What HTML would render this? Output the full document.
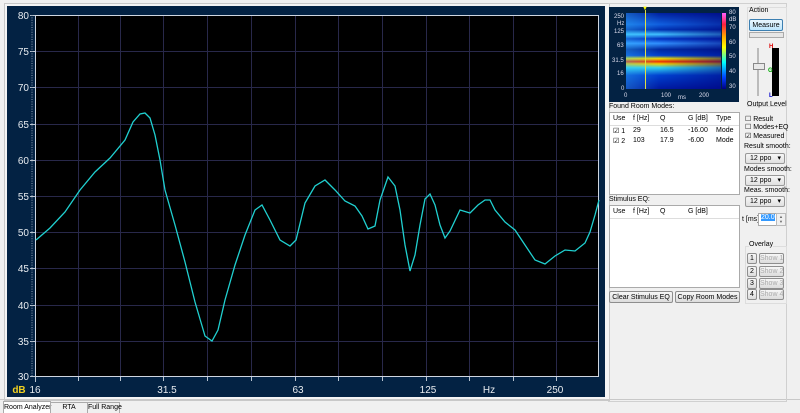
<!DOCTYPE html>
<html><head><style>
html,body{margin:0;width:800px;height:413px;overflow:hidden}
body{background:#f0f0f0;position:relative;font-family:"Liberation Sans",sans-serif;font-size:7px;color:#000}
*{white-space:nowrap}
.a{position:absolute}
.btn{position:absolute;background:linear-gradient(#f6f6f6,#dcdcdc);border:1px solid #8e8e8e;border-radius:2px;text-align:center;font-size:7px;line-height:11px;overflow:hidden}
.dd{position:absolute;background:linear-gradient(#f6f6f6,#e0e0e0);border:1px solid #999;border-radius:2px;font-size:7px;line-height:10px;padding-left:4px;box-sizing:border-box}
.dd:after{content:"▾";position:absolute;right:3px;top:0;font-size:7px}
table{border-collapse:collapse;font-size:7px}
.sl{position:absolute;color:#dde;font-size:6px;line-height:6px}
</style></head><body>
<div class="a" style="left:4px;top:3px;width:604px;height:396px;border:1px solid #c8c8c8;background:#f4f4f4"></div>
<svg class="a" style="left:0;top:0" width="606" height="400">
<rect x="7" y="6" width="598" height="391" fill="#032243"/>
<rect x="35" y="15" width="564" height="362" fill="#000"/>
<g stroke="#28284a" stroke-width="1">
<line x1="35" y1="51.5" x2="599" y2="51.5"/><line x1="35" y1="87.5" x2="599" y2="87.5"/><line x1="35" y1="124.5" x2="599" y2="124.5"/><line x1="35" y1="160.5" x2="599" y2="160.5"/><line x1="35" y1="196.5" x2="599" y2="196.5"/><line x1="35" y1="232.5" x2="599" y2="232.5"/><line x1="35" y1="268.5" x2="599" y2="268.5"/><line x1="35" y1="305.5" x2="599" y2="305.5"/><line x1="35" y1="341.5" x2="599" y2="341.5"/>
<line x1="78.5" y1="15" x2="78.5" y2="377"/><line x1="120.5" y1="15" x2="120.5" y2="377"/><line x1="163.5" y1="15" x2="163.5" y2="377"/><line x1="207.5" y1="15" x2="207.5" y2="377"/><line x1="251.5" y1="15" x2="251.5" y2="377"/><line x1="295.5" y1="15" x2="295.5" y2="377"/><line x1="338.5" y1="15" x2="338.5" y2="377"/><line x1="382.5" y1="15" x2="382.5" y2="377"/><line x1="426.5" y1="15" x2="426.5" y2="377"/><line x1="469.5" y1="15" x2="469.5" y2="377"/><line x1="513.5" y1="15" x2="513.5" y2="377"/><line x1="556.5" y1="15" x2="556.5" y2="377"/>
</g>
<rect x="35.5" y="15.5" width="563" height="361" fill="none" stroke="#cfd6e0"/>
<g stroke="#b8c4d0">
<line x1="30" y1="15.5" x2="35" y2="15.5"/><line x1="30" y1="51.5" x2="35" y2="51.5"/><line x1="30" y1="87.5" x2="35" y2="87.5"/><line x1="30" y1="124.5" x2="35" y2="124.5"/><line x1="30" y1="160.5" x2="35" y2="160.5"/><line x1="30" y1="196.5" x2="35" y2="196.5"/><line x1="30" y1="232.5" x2="35" y2="232.5"/><line x1="30" y1="268.5" x2="35" y2="268.5"/><line x1="30" y1="305.5" x2="35" y2="305.5"/><line x1="30" y1="341.5" x2="35" y2="341.5"/><line x1="30" y1="376.5" x2="35" y2="376.5"/>
<line x1="35.5" y1="377" x2="35.5" y2="382"/><line x1="78.5" y1="377" x2="78.5" y2="381"/><line x1="120.5" y1="377" x2="120.5" y2="381"/><line x1="163.5" y1="377" x2="163.5" y2="381"/><line x1="207.5" y1="377" x2="207.5" y2="381"/><line x1="251.5" y1="377" x2="251.5" y2="381"/><line x1="295.5" y1="377" x2="295.5" y2="381"/><line x1="338.5" y1="377" x2="338.5" y2="381"/><line x1="382.5" y1="377" x2="382.5" y2="381"/><line x1="426.5" y1="377" x2="426.5" y2="381"/><line x1="469.5" y1="377" x2="469.5" y2="381"/><line x1="513.5" y1="377" x2="513.5" y2="381"/><line x1="556.5" y1="377" x2="556.5" y2="381"/>
</g>
<path d="M32 15 V377" stroke="#8a9ab0" stroke-dasharray="1 1.4"/>
<g fill="#e8ecf0" font-family="Liberation Sans" font-size="10" text-anchor="end">
<text x="29" y="19">80</text><text x="29" y="55">75</text><text x="29" y="91">70</text><text x="29" y="128">65</text><text x="29" y="164">60</text><text x="29" y="200">55</text><text x="29" y="236">50</text><text x="29" y="272">45</text><text x="29" y="309">40</text><text x="29" y="345">35</text><text x="29" y="380">30</text>
</g>
<g fill="#e8ecf0" font-family="Liberation Sans" font-size="10" text-anchor="middle">
<text x="19" y="393" fill="#f0d020" font-weight="bold">dB</text>
<text x="35" y="393">16</text><text x="167" y="393">31.5</text><text x="298" y="393">63</text><text x="428" y="393">125</text><text x="489" y="393">Hz</text><text x="555" y="393">250</text>
</g>
<polyline fill="none" stroke="#20d0d0" stroke-width="1.3" points="36,240 50,228 65,212 80,190 95,172 110,158 125,140 133,122 140,114 145,113 150,118 155,135 160,160 165,190 175,225 185,262 195,302 205,336 212,341 218,330 225,300 235,265 245,235 255,210 262,205 270,220 280,240 290,246 296,240 305,203 315,186 325,180 335,190 345,201 355,206 362,216 368,229 375,226 380,200 388,177 395,186 400,210 405,245 410,271 415,255 420,225 425,199 430,194 435,205 440,225 445,238 450,231 460,210 470,213 478,205 485,200 490,200 495,210 505,222 515,230 525,245 535,260 545,264 555,256 565,250 575,251 585,243 590,232 595,215 599,200"/>
</svg>
<!-- tabs -->
<div class="a" style="left:0;top:399px;width:800px;height:1px;background:#c8c8c8"></div>
<div class="a" style="left:3px;top:401px;width:46px;height:12px;background:#fff;border:1px solid #aaa;border-bottom:none;font-size:7px;line-height:12px;text-align:center">Room Analyzer</div>
<div class="a" style="left:50px;top:402px;width:36px;height:11px;border:1px solid #aaa;border-bottom:none;font-size:7px;line-height:10px;text-align:center">RTA</div>
<div class="a" style="left:87px;top:402px;width:31px;height:11px;border:1px solid #aaa;border-bottom:none;font-size:7px;line-height:10px;text-align:center">Full Range</div>
<!-- right panel -->
<div class="a" style="left:608px;top:3px;width:178px;height:397px;border:1px solid #d0d0d0;border-left:none"></div>
<div class="a" style="left:609px;top:7px;width:130px;height:95px;background:#032243"></div>
<div class="a" style="left:626px;top:13px;width:95px;height:76px;background:
linear-gradient(180deg,#0020a0 0%,#1060e0 15%,#0030b0 22%,#40c0ff 28%,#0030c0 34%,#3090ff 40%,#0028a0 48%,#0040d0 56%,#f0e000 60%,#f03000 64%,#f0d000 67%,#30d0f0 72%,#0040d0 82%,#0018a0 100%)"></div>
<div class="a" style="left:626px;top:13px;width:95px;height:76px;background:linear-gradient(90deg,rgba(60,200,255,.35) 0%,rgba(0,0,120,0) 35%,rgba(0,0,120,.5) 100%)"></div>
<div class="a" style="left:645px;top:10px;width:1px;height:79px;background:#e0e040"></div>
<div class="a" style="left:642px;top:6px;color:#ff0;font-size:6px">▼</div>
<div class="a" style="left:722px;top:13px;width:4px;height:76px;background:linear-gradient(#ff60ff,#ff2040 15%,#ffa000 30%,#ffff00 45%,#00ffff 65%,#0040ff 85%,#000080)"></div>
<div class="sl" style="left:614px;top:14px">250</div>
<div class="sl" style="left:617px;top:21px">Hz</div>
<div class="sl" style="left:614px;top:29px">125</div>
<div class="sl" style="left:617px;top:43px">63</div>
<div class="sl" style="left:612px;top:58px">31.5</div>
<div class="sl" style="left:617px;top:71px">16</div>
<div class="sl" style="left:621px;top:86px">0</div>
<div class="sl" style="left:729px;top:10px">80</div>
<div class="sl" style="left:729px;top:17px">dB</div>
<div class="sl" style="left:729px;top:25px">70</div>
<div class="sl" style="left:729px;top:40px">60</div>
<div class="sl" style="left:729px;top:54px">50</div>
<div class="sl" style="left:729px;top:69px">40</div>
<div class="sl" style="left:729px;top:84px">30</div>
<div class="sl" style="left:624px;top:93px">0</div>
<div class="sl" style="left:661px;top:93px">100</div>
<div class="sl" style="left:678px;top:95px">ms</div>
<div class="sl" style="left:699px;top:93px">200</div>
<!-- Found room modes -->
<div class="a" style="left:609px;top:103px">Found Room Modes:</div>
<div class="a" style="left:609px;top:112px;width:129px;height:81px;background:#fff;border:1px solid #aaa">
<table style="width:100%">
<tr style="height:12px;border-bottom:1px solid #ddd"><td style="width:18px;padding-left:3px">Use</td><td style="width:25px">f [Hz]</td><td style="width:26px">Q</td><td style="width:26px">G [dB]</td><td>Type</td></tr>
<tr style="height:9px"><td style="padding-left:3px">☑ 1</td><td>29</td><td>16.5</td><td>-16.00</td><td>Mode</td></tr>
<tr style="height:9px"><td style="padding-left:3px">☑ 2</td><td>103</td><td>17.9</td><td>-6.00</td><td>Mode</td></tr>
</table></div>
<div class="a" style="left:609px;top:196px">Stimulus EQ:</div>
<div class="a" style="left:609px;top:205px;width:129px;height:81px;background:#fff;border:1px solid #aaa">
<table style="width:100%">
<tr style="height:12px;border-bottom:1px solid #ddd"><td style="width:18px;padding-left:3px">Use</td><td style="width:25px">f [Hz]</td><td style="width:26px">Q</td><td style="width:26px">G [dB]</td><td></td></tr>
</table></div>
<div class="btn" style="left:609px;top:291px;width:62px;height:10px">Clear Stimulus EQ</div>
<div class="btn" style="left:675px;top:291px;width:63px;height:10px">Copy Room Modes</div>
<!-- action -->
<div class="a" style="left:747px;top:7px;width:38px;height:98px;border:1px solid #ddd"></div>
<div class="a" style="left:749px;top:7px">Action</div>
<div class="btn" style="left:749px;top:19px;width:32px;height:10px;background:linear-gradient(#eaf6fd,#bee6fd);border-color:#3c7fb1">Measure</div>
<div class="a" style="left:749px;top:32px;width:33px;height:4px;border:1px solid #aaa;background:#e6e6e6"></div>
<div class="a" style="left:757px;top:48px;width:2px;height:48px;background:#bbb"></div>
<div class="a" style="left:753px;top:63px;width:10px;height:5px;background:#e8e8e8;border:1px solid #888"></div>
<div class="a" style="left:772px;top:48px;width:7px;height:48px;background:#000"></div>
<div class="a" style="left:769px;top:44px;color:#d00;font-size:6px;font-weight:bold">H</div>
<div class="a" style="left:768px;top:68px;color:#0a0;font-size:6px;font-weight:bold">G</div>
<div class="a" style="left:769px;top:93px;color:#00c;font-size:6px;font-weight:bold">L</div>
<div class="a" style="left:747px;top:101px">Output Level</div>
<div class="a" style="left:745px;top:116px;line-height:8.3px">☐ Result<br>☐ Modes+EQ<br>☑ Measured</div>
<div class="a" style="left:744px;top:143px">Result smooth:</div>
<div class="dd" style="left:745px;top:153px;width:40px;height:11px">12 ppo</div>
<div class="a" style="left:744px;top:166px">Modes smooth:</div>
<div class="dd" style="left:745px;top:175px;width:40px;height:11px">12 ppo</div>
<div class="a" style="left:744px;top:187px">Meas. smooth:</div>
<div class="dd" style="left:745px;top:196px;width:40px;height:11px">12 ppo</div>
<div class="a" style="left:742px;top:216px">t [ms]</div>
<div class="a" style="left:758px;top:213px;width:17px;height:11px;background:#fff;border:1px solid #aaa"><span style="background:#3399ff;color:#fff;font-size:7px;margin-left:2px">20.0</span></div>
<div class="a" style="left:776px;top:213px;width:8px;height:11px;border:1px solid #bbb;font-size:4px;line-height:5px;text-align:center;color:#666">▲<br>▼</div>
<div class="a" style="left:745px;top:246px;width:40px;height:56px;border:1px solid #ddd"></div>
<div class="a" style="left:749px;top:241px;background:#f0f0f0">Overlay</div>
<div class="btn" style="left:747px;top:253px;width:8px;height:9px;line-height:9px">1</div><div class="btn" style="left:759px;top:253px;width:23px;height:9px;line-height:9px;color:#aaa">Show 1</div>
<div class="btn" style="left:747px;top:266px;width:8px;height:9px;line-height:9px">2</div><div class="btn" style="left:759px;top:266px;width:23px;height:9px;line-height:9px;color:#aaa">Show 2</div>
<div class="btn" style="left:747px;top:278px;width:8px;height:9px;line-height:9px">3</div><div class="btn" style="left:759px;top:278px;width:23px;height:9px;line-height:9px;color:#aaa">Show 3</div>
<div class="btn" style="left:747px;top:289px;width:8px;height:9px;line-height:9px">4</div><div class="btn" style="left:759px;top:289px;width:23px;height:9px;line-height:9px;color:#aaa">Show 4</div>
</body></html>
